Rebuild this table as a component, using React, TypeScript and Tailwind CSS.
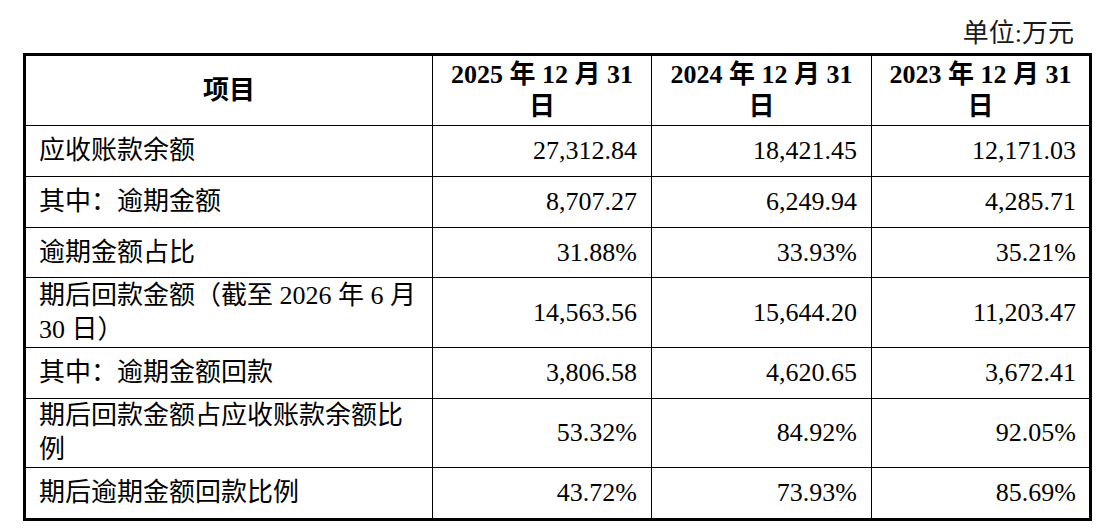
import React from "react";

type Row = { label: string; values: string[]; h: string };

const rows: Row[] = [
  { label: "应收账款余额", values: ["27,312.84", "18,421.45", "12,171.03"], h: "h-[51px]" },
  { label: "其中：逾期金额", values: ["8,707.27", "6,249.94", "4,285.71"], h: "h-[51px]" },
  { label: "逾期金额占比", values: ["31.88%", "33.93%", "35.21%"], h: "h-[50px]" },
  { label: "期后回款金额（截至 2026 年 6 月 30 日）", values: ["14,563.56", "15,644.20", "11,203.47"], h: "h-[70px]" },
  { label: "其中：逾期金额回款", values: ["3,806.58", "4,620.65", "3,672.41"], h: "h-[51px]" },
  { label: "期后回款金额占应收账款余额比例", values: ["53.32%", "84.92%", "92.05%"], h: "h-[69px]" },
  { label: "期后逾期金额回款比例", values: ["43.72%", "73.93%", "85.69%"], h: "h-[50px]" },
];

const years = ["2025", "2024", "2023"];

export default function App() {
  return (
    <div
      className="w-[1101px] h-[528px] bg-white text-black overflow-hidden"
      style={{ fontFamily: '"Liberation Serif", "Noto Sans CJK SC", serif' }}
    >
      <div className="pl-[23px] w-[1092px]">
        <div className="pt-[17px] pb-[2px] pr-[18px] text-right text-[26px] leading-[34px] text-[#1a1a1a]">
          单位:万元
        </div>
        <table className="table-fixed w-[1069px] border-separate border-spacing-0 border-[3px] border-black">
          <colgroup>
            <col className="w-[407px]" />
            <col className="w-[219px]" />
            <col className="w-[220px]" />
            <col className="w-[217px]" />
          </colgroup>
          <thead>
            <tr>
              <th className="h-[70px] border-r border-b border-black px-[13px] text-center align-middle text-[26px] leading-[32px] font-bold">
                项目
              </th>
              {years.map((y, i) => (
                <th
                  key={y}
                  className={
                    "h-[70px] border-b border-black px-[13px] text-center align-middle text-[26px] leading-[32px] font-bold " +
                    (i < 2 ? "border-r" : "")
                  }
                >
                  {y} 年 12 月 31 日
                </th>
              ))}
            </tr>
          </thead>
          <tbody>
            {rows.map((r, ri) => {
              const last = ri === rows.length - 1;
              return (
                <tr key={r.label}>
                  <td
                    className={
                      r.h +
                      " border-r border-black pl-[13px] pr-[13px] py-0 text-left align-middle text-[26px] leading-[34px] font-normal " +
                      (last ? "" : "border-b")
                    }
                  >
                    {r.label}
                  </td>
                  {r.values.map((v, i) => (
                    <td
                      key={i}
                      className={
                        r.h +
                        " border-black pl-[13px] py-0 text-right align-middle text-[26px] leading-[34px] " +
                        (i < 2 ? "border-r pr-[14px] " : "pr-[13px] ") +
                        (last ? "" : "border-b")
                      }
                    >
                      {v}
                    </td>
                  ))}
                </tr>
              );
            })}
          </tbody>
        </table>
      </div>
    </div>
  );
}
